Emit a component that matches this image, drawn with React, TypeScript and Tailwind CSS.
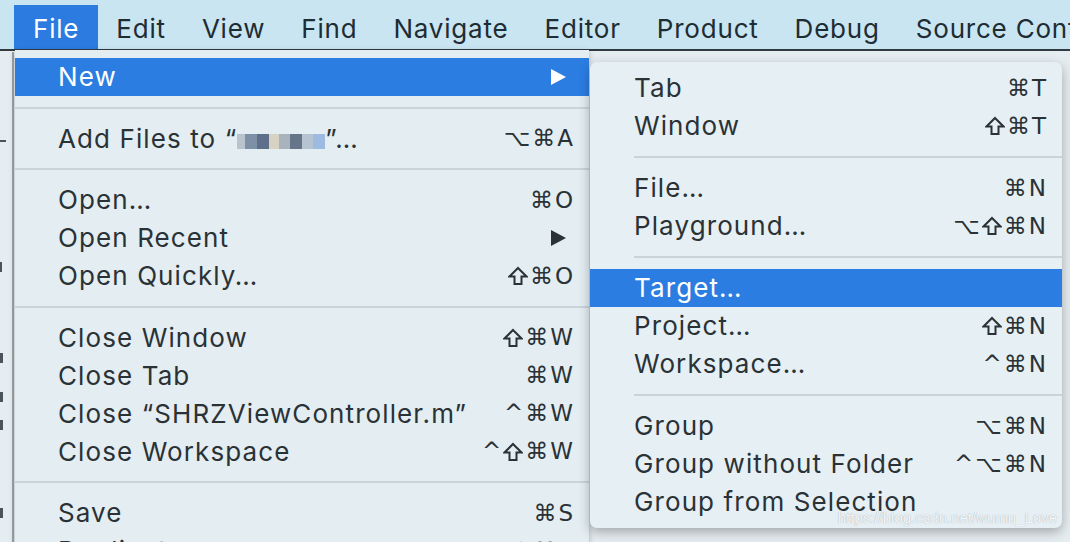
import React from 'react';

type Row =
  | { kind: 'sep' }
  | { kind: 'item'; label: React.ReactNode; keys?: string; arrow?: boolean; active?: boolean };

const sep: Row = { kind: 'sep' };
const item = (label: React.ReactNode, keys?: string, extra: Partial<Row> = {}): Row =>
  ({ kind: 'item', label, keys, ...extra } as Row);

const menuBar = ['File', 'Edit', 'View', 'Find', 'Navigate', 'Editor', 'Product', 'Debug', 'Source Control'];

// pixelated project name, hidden on purpose
const Mosaic = () => (
  <span className="inline-flex h-[15px] items-stretch align-[-1px] blur-[0.6px]">
    <span className="w-[8px] bg-[#b9c3cc]" />
    <span className="w-[12px] bg-[#7e90a6]" />
    <span className="w-[12px] bg-[#5d6f8a]" />
    <span className="w-[10px] bg-[#d8d2c4]" />
    <span className="w-[11px] bg-[#a8b3be]" />
    <span className="w-[12px] bg-[#66758a]" />
    <span className="w-[11px] bg-[#b6c4d1]" />
    <span className="w-[12px] bg-[#9dbbe0]" />
  </span>
);

const ShiftKey = ({ color }: { color: string }) => (
  <svg width="20" height="20" viewBox="0 0 20 20" className="mr-[2px]">
    <path
      d="M10 2 L18.5 10.5 L13.5 10.5 L13.5 18 L6.5 18 L6.5 10.5 L1.5 10.5 Z"
      fill="none"
      stroke={color}
      strokeWidth="2"
      strokeLinejoin="miter"
    />
  </svg>
);

const Keys = ({ keys, color }: { keys: string; color: string }) => (
  <span className="flex items-center whitespace-nowrap font-['DejaVu_Sans',sans-serif] text-[23px] leading-none tracking-[2px]">
    {Array.from(keys).map((k, i) =>
      k === '⇧' ? <ShiftKey key={i} color={color} /> : <span key={i}>{k}</span>
    )}
  </span>
);

const fileMenu: Row[] = [
  item('New', undefined, { arrow: true, active: true }),
  sep,
  item(
    <>
      Add Files to “<Mosaic />”…
    </>,
    '⌥⌘A'
  ),
  sep,
  item('Open…', '⌘O'),
  item('Open Recent', undefined, { arrow: true }),
  item('Open Quickly…', '⇧⌘O'),
  sep,
  item('Close Window', '⇧⌘W'),
  item('Close Tab', '⌘W'),
  item('Close “SHRZViewController.m”', '^⌘W'),
  item('Close Workspace', '^⇧⌘W'),
  sep,
  item('Save', '⌘S'),
  item('Duplicate…', '⇧⌘S'),
];

const newMenu: Row[] = [
  item('Tab', '⌘T'),
  item('Window', '⇧⌘T'),
  sep,
  item('File…', '⌘N'),
  item('Playground…', '⌥⇧⌘N'),
  sep,
  item('Target…', undefined, { active: true }),
  item('Project…', '⇧⌘N'),
  item('Workspace…', '^⌘N'),
  sep,
  item('Group', '⌥⌘N'),
  item('Group without Folder', '^⌥⌘N'),
  item('Group from Selection'),
];

const MenuRows = ({ rows }: { rows: Row[] }) => (
  <>
    {rows.map((r, i) =>
      r.kind === 'sep' ? (
        <div key={i} className="flex h-[24px] items-center">
          <div className="h-[2px] w-full bg-[#c9d3d8]" />
        </div>
      ) : (
        <div
          key={i}
          className={`flex h-[38px] shrink-0 items-center justify-between pl-[43px] pr-[14px] ${
            r.active ? 'bg-[#2b7de2] text-white' : 'text-[#2a3236]'
          }`}
        >
          <span className="whitespace-nowrap text-[26px] leading-none tracking-[1.1px]">{r.label}</span>
          {r.keys && <Keys keys={r.keys} color={r.active ? '#ffffff' : '#2a3236'} />}
          {r.arrow && (
            <svg width="17" height="18" viewBox="0 0 17 18" className="mr-[8px]">
              <path d="M1 1 L16 9 L1 17 Z" fill={r.active ? '#ffffff' : '#2a3236'} />
            </svg>
          )}
        </div>
      )
    )}
  </>
);

export default function App() {
  return (
    <div className="relative h-[542px] w-[1070px] overflow-hidden bg-[#e6edf0] font-['Inter',sans-serif]">
      {/* menu bar */}
      <div className="flex h-[51px] items-stretch border-b-2 border-[#2f3b40] bg-[#c8e5f1] pt-[5px]">
        <div className="w-[14px] shrink-0" />
        {menuBar.map((m, i) => (
          <div
            key={m}
            className={`flex shrink-0 items-center whitespace-nowrap pt-[3px] text-[26px] tracking-[0.8px] ${
              i === 0 ? 'bg-[#2b7be0] px-[19px] text-white' : 'px-[18px] text-[#1e2c33]'
            }`}
          >
            {m}
          </div>
        ))}
      </div>

      {/* window content peeking out on the left */}
      <div className="absolute left-[12px] top-[52px] h-[490px] w-[2px] bg-[#9aa5ab]" />
      <div className="absolute left-0 top-[140px] h-[2px] w-[6px] bg-[#4a555b]" />
      <div className="absolute left-0 top-[262px] h-[10px] w-[2px] bg-[#4a555b]" />
      <div className="absolute left-0 top-[353px] h-[10px] w-[3px] bg-[#4a555b]" />
      <div className="absolute left-0 top-[392px] h-[10px] w-[3px] bg-[#4a555b]" />
      <div className="absolute left-0 top-[420px] h-[10px] w-[3px] bg-[#4a555b]" />
      <div className="absolute left-0 top-[508px] h-[10px] w-[3px] bg-[#4a555b]" />

      {/* File menu */}
      <div className="absolute left-[15px] top-[50px] flex h-[520px] w-[574px] flex-col bg-[#e3edf2] pt-[8px] shadow-[0_2px_6px_rgba(0,0,0,0.25)]">
        <MenuRows rows={fileMenu} />
      </div>

      {/* New submenu */}
      <div className="absolute left-[590px] top-[62px] flex w-[472px] flex-col rounded-[7px] bg-[#e5eff4] py-[7px] shadow-[0_4px_12px_rgba(0,0,0,0.3)]">
        <div className="flex flex-col [&>div]:pl-[44px]">
          <MenuRows rows={newMenu} />
        </div>
        <span className="absolute bottom-[3px] right-[5px] font-['Liberation_Sans',sans-serif] text-[15px] leading-none text-white/90 [text-shadow:0_0_1px_rgba(80,90,100,0.6)]">
          https://blog.csdn.net/wumu_Love
        </span>
      </div>
    </div>
  );
}
